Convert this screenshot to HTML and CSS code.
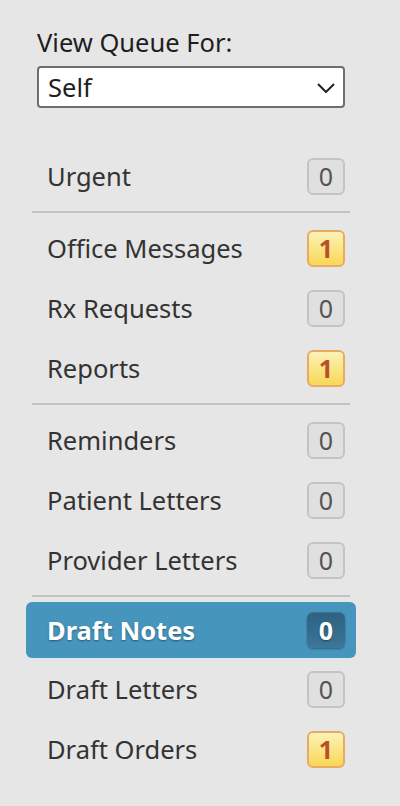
FILE: index.html
```html
<!DOCTYPE html>
<html lang="en">
<head>
    <meta charset="UTF-8">
    <meta name="viewport" content="width=device-width, initial-scale=1.0">
    <title>Queue</title>
    <link rel="stylesheet" href="styles.css">
</head>
<body>
    <div class="sidebar">
        <div class="queue-for">
            <label for="queueSelect">View Queue For:</label>
            <div class="select-box">
                <span>Self</span>
                <svg class="chevron" width="18" height="10" viewBox="0 0 18 10">
                    <path d="M1 1 L9 9 L17 1" fill="none" stroke="#222" stroke-width="2"/>
                </svg>
            </div>
        </div>

        <ul class="queue-list">
            <li class="item"><span>Urgent</span><span class="badge">0</span></li>
            <li class="divider"></li>
            <li class="item"><span>Office Messages</span><span class="badge new">1</span></li>
            <li class="item"><span>Rx Requests</span><span class="badge">0</span></li>
            <li class="item"><span>Reports</span><span class="badge new">1</span></li>
            <li class="divider"></li>
            <li class="item"><span>Reminders</span><span class="badge">0</span></li>
            <li class="item"><span>Patient Letters</span><span class="badge">0</span></li>
            <li class="item"><span>Provider Letters</span><span class="badge">0</span></li>
            <li class="divider"></li>
            <li class="item active"><span>Draft Notes</span><span class="badge">0</span></li>
            <li class="item"><span>Draft Letters</span><span class="badge">0</span></li>
            <li class="item"><span>Draft Orders</span><span class="badge new">1</span></li>
        </ul>
    </div>
</body>
</html>
```

FILE: styles.css
```css
body {
    font-family: 'Noto Sans', 'Open Sans', sans-serif;
    margin: 0;
    background-color: #e6e6e6;
    color: #333;
}
.sidebar {
    padding: 24px 44px 0 26px;
}
.queue-for {
    padding: 0 11px;
}
.queue-for label {
    display: block;
    font-size: 25.5px;
    color: #1e1e1e;
    line-height: 36px;
    margin-bottom: 6px;
}
.select-box {
    height: 38px;
    border: 2px solid #6e6e6e;
    border-radius: 4px;
    background: #fff;
    display: flex;
    align-items: center;
    justify-content: space-between;
    padding: 0 8px 0 9px;
    font-size: 25.5px;
    color: #1e1e1e;
}
.chevron {
    margin-top: 2px;
}
.queue-list {
    list-style: none;
    margin: 38px 0 0;
    padding: 0;
}
.item {
    height: 60px;
    display: flex;
    align-items: center;
    justify-content: space-between;
    padding: 0 11px 0 21px;
    font-size: 25.5px;
}
.divider {
    height: 2px;
    margin: 5px 6px;
    background: #c2c2c2;
}
.badge {
    box-sizing: border-box;
    width: 38px;
    height: 37px;
    border: 2px solid #c4c4c4;
    border-radius: 6px;
    background: #e0e0e0;
    color: #555;
    font-size: 25px;
    display: flex;
    align-items: center;
    justify-content: center;
}
.badge.new {
    border-color: #e8ab63;
    background: linear-gradient(#fdf2b8, #f9d855);
    color: #b8502a;
    font-weight: bold;
}
.item.active {
    height: 56px;
    margin-bottom: 1px;
    background: #4595bd;
    border-radius: 6px;
    color: #fff;
    font-weight: bold;
    text-shadow: 0 1px 2px rgba(0, 0, 0, 0.4);
}
.item.active .badge {
    height: 36px;
    border: none;
    background: linear-gradient(#2d6181, #3c7699);
    box-shadow: 0 1px 2px rgba(0, 0, 0, 0.35), inset 0 1px 0 rgba(255, 255, 255, 0.1);
    color: #fff;
}
```
